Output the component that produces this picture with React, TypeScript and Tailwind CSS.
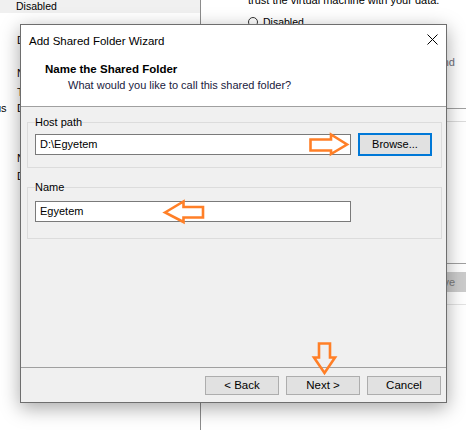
import * as React from "react";

const GroupBox: React.FC<{ label: string; className?: string; children: React.ReactNode }> = ({
  label,
  className,
  children,
}) => (
  <fieldset className={`ml-[6px] mr-[4px] border border-[#dcdcdc] pl-[7px] pr-[9px] ${className ?? ""}`}>
    <legend className="text-[11px] leading-[14px] text-black">{label}</legend>
    {children}
  </fieldset>
);

const WinButton: React.FC<{ children: React.ReactNode; focused?: boolean }> = ({ children, focused }) => (
  <button
    className={
      focused
        ? "flex h-[23px] w-[74px] items-center justify-center border-2 border-[#0078d7] bg-[#e1e1e1] text-[11px] text-black"
        : "flex h-[19px] w-[74px] items-center justify-center border border-[#adadad] bg-[#e1e1e1] text-[11.5px] text-black"
    }
  >
    {children}
  </button>
);

const Annotations: React.FC = () => (
  <svg
    className="pointer-events-none absolute left-0 top-0"
    width={466}
    height={430}
    viewBox="0 0 466 430"
    fill="none"
    stroke="#ff7f27"
    strokeWidth={2.6}
    strokeLinejoin="miter"
  >
    {/* pointing at Browse... */}
    <polygon points="310.5,139.5 331,139.5 331,134.5 347,144.5 331,154 331,150.5 310.5,150.5" />
    {/* pointing at the name */}
    <polygon points="165,212.5 183.5,201.5 183.5,207 203,207 203,217.5 183.5,217.5 183.5,222" />
    {/* pointing at Next > */}
    <polygon points="319,343.5 330,343.5 330,357.5 335,357.5 324.5,373 314,357.5 319,357.5" />
  </svg>
);

// row of the settings list; only its first letters peek out left of the wizard
const PeekRow: React.FC<{ className: string; children: React.ReactNode }> = ({ className, children }) => (
  <div className={`h-[16px] w-[20px] overflow-hidden whitespace-nowrap leading-[16px] ${className}`}>{children}</div>
);

export default function App() {
  return (
    <div className="relative flex h-[430px] w-[466px] overflow-hidden bg-white font-['Liberation_Sans',Arial,sans-serif] text-black">
      {/* settings window behind the wizard */}
      <div className="flex w-[201px] shrink-0 flex-col border-r border-[#8c8c8c] text-[11px]">
        <div className="h-[13px] bg-[#f0f0f0] pl-[16px] text-[10.5px] leading-[13px]">Disabled</div>
        <PeekRow className="mt-[19px] pl-[17px]">D</PeekRow>
        <PeekRow className="mt-[17px] pl-[17px]">N</PeekRow>
        <PeekRow className="mt-[3px] pl-[17px]">T</PeekRow>
        <div className="flex h-[16px] w-[20px] overflow-hidden whitespace-nowrap leading-[16px]">
          <span className="-ml-[5px] w-[22px] shrink-0">us</span>
          <span>D</span>
        </div>
        <PeekRow className="mt-[34px] pl-[17px]">N</PeekRow>
        <PeekRow className="mt-[2px] pl-[17px]">D</PeekRow>
      </div>

      <div className="flex flex-1 flex-col text-[11px]">
        <div className="-mt-[8px] h-[16px] pl-[47px] leading-[16px]">trust the virtual machine with your data.</div>
        <div className="mt-[9px] flex h-[10px] items-center pl-[47px]">
          <span className="h-[10px] w-[10px] rounded-full border border-[#333]" />
          <span className="ml-[5px] text-[10.5px] leading-[10px]">Disabled</span>
        </div>
        <div className="mt-[28px] h-[14px] pr-[11px] text-right leading-[14px] text-[#70707a]">nd</div>
        <div className="mt-[39px] border-t border-[#a0a0a0]" />
        <div className="mt-[12px] border-t border-[#dcdcdc]" />
        <div className="mt-[141px] border-t border-[#a0a0a0]" />
        <div className="mt-[8px] flex h-[20px] items-center justify-end bg-[#cccccc] pr-[11px] text-[#7a7a7a]">ve</div>
        <div className="mt-[12px] border-t border-[#e3e3e3]" />
      </div>

      {/* Add Shared Folder Wizard dialog */}
      <div className="absolute left-[20px] top-[24px] flex h-[379px] w-[427px] flex-col border border-[#6e6e6e] bg-white shadow-[0_5px_18px_rgba(0,0,0,0.35)]">
        <div className="flex h-[31px] shrink-0 items-center justify-between pl-[8px] pr-[8px]">
          <span className="text-[11.5px] leading-[14px]">Add Shared Folder Wizard</span>
          <svg width="11" height="11" viewBox="0 0 11 11" className="-mt-[2px]">
            <path d="M0.5 0.5 L10.5 10.5 M10.5 0.5 L0.5 10.5" stroke="#000" strokeWidth="1" />
          </svg>
        </div>
        <div className="h-[51px] shrink-0 border-b border-[#a0a0a0] pt-[6px]">
          <div className="pl-[24px] text-[11.5px] font-bold leading-[15px]">Name the Shared Folder</div>
          <div className="mt-[1px] pl-[47px] text-[11px] leading-[15px] text-[#1a1a40]">
            What would you like to call this shared folder?
          </div>
        </div>

        <div className="flex flex-1 flex-col bg-[#f0f0f0]">
          <GroupBox label="Host path" className="mt-[8px] pb-[11px] pt-[4px]">
            <div className="flex h-[23px] items-center">
              <div className="h-[21px] w-[316px] border border-[#7a7a7a] bg-white pl-[4px] text-[11px] leading-[19px]">
                D:\Egyetem
              </div>
              <div className="ml-[7px]">
                <WinButton focused>Browse...</WinButton>
              </div>
            </div>
          </GroupBox>

          <GroupBox label="Name" className="mt-[12px] pb-[16px] pt-[7px]">
            <div className="h-[21px] w-[316px] border border-[#7a7a7a] bg-white pl-[4px] text-[11px] leading-[19px]">
              Egyetem
            </div>
          </GroupBox>
        </div>

        <div className="flex h-[35px] shrink-0 justify-end gap-[7px] border-t border-[#a0a0a0] bg-[#f0f0f0] pr-[5px] pt-[8px]">
          <WinButton>&lt; Back</WinButton>
          <WinButton>Next &gt;</WinButton>
          <WinButton>Cancel</WinButton>
        </div>
      </div>

      <Annotations />
    </div>
  );
}
